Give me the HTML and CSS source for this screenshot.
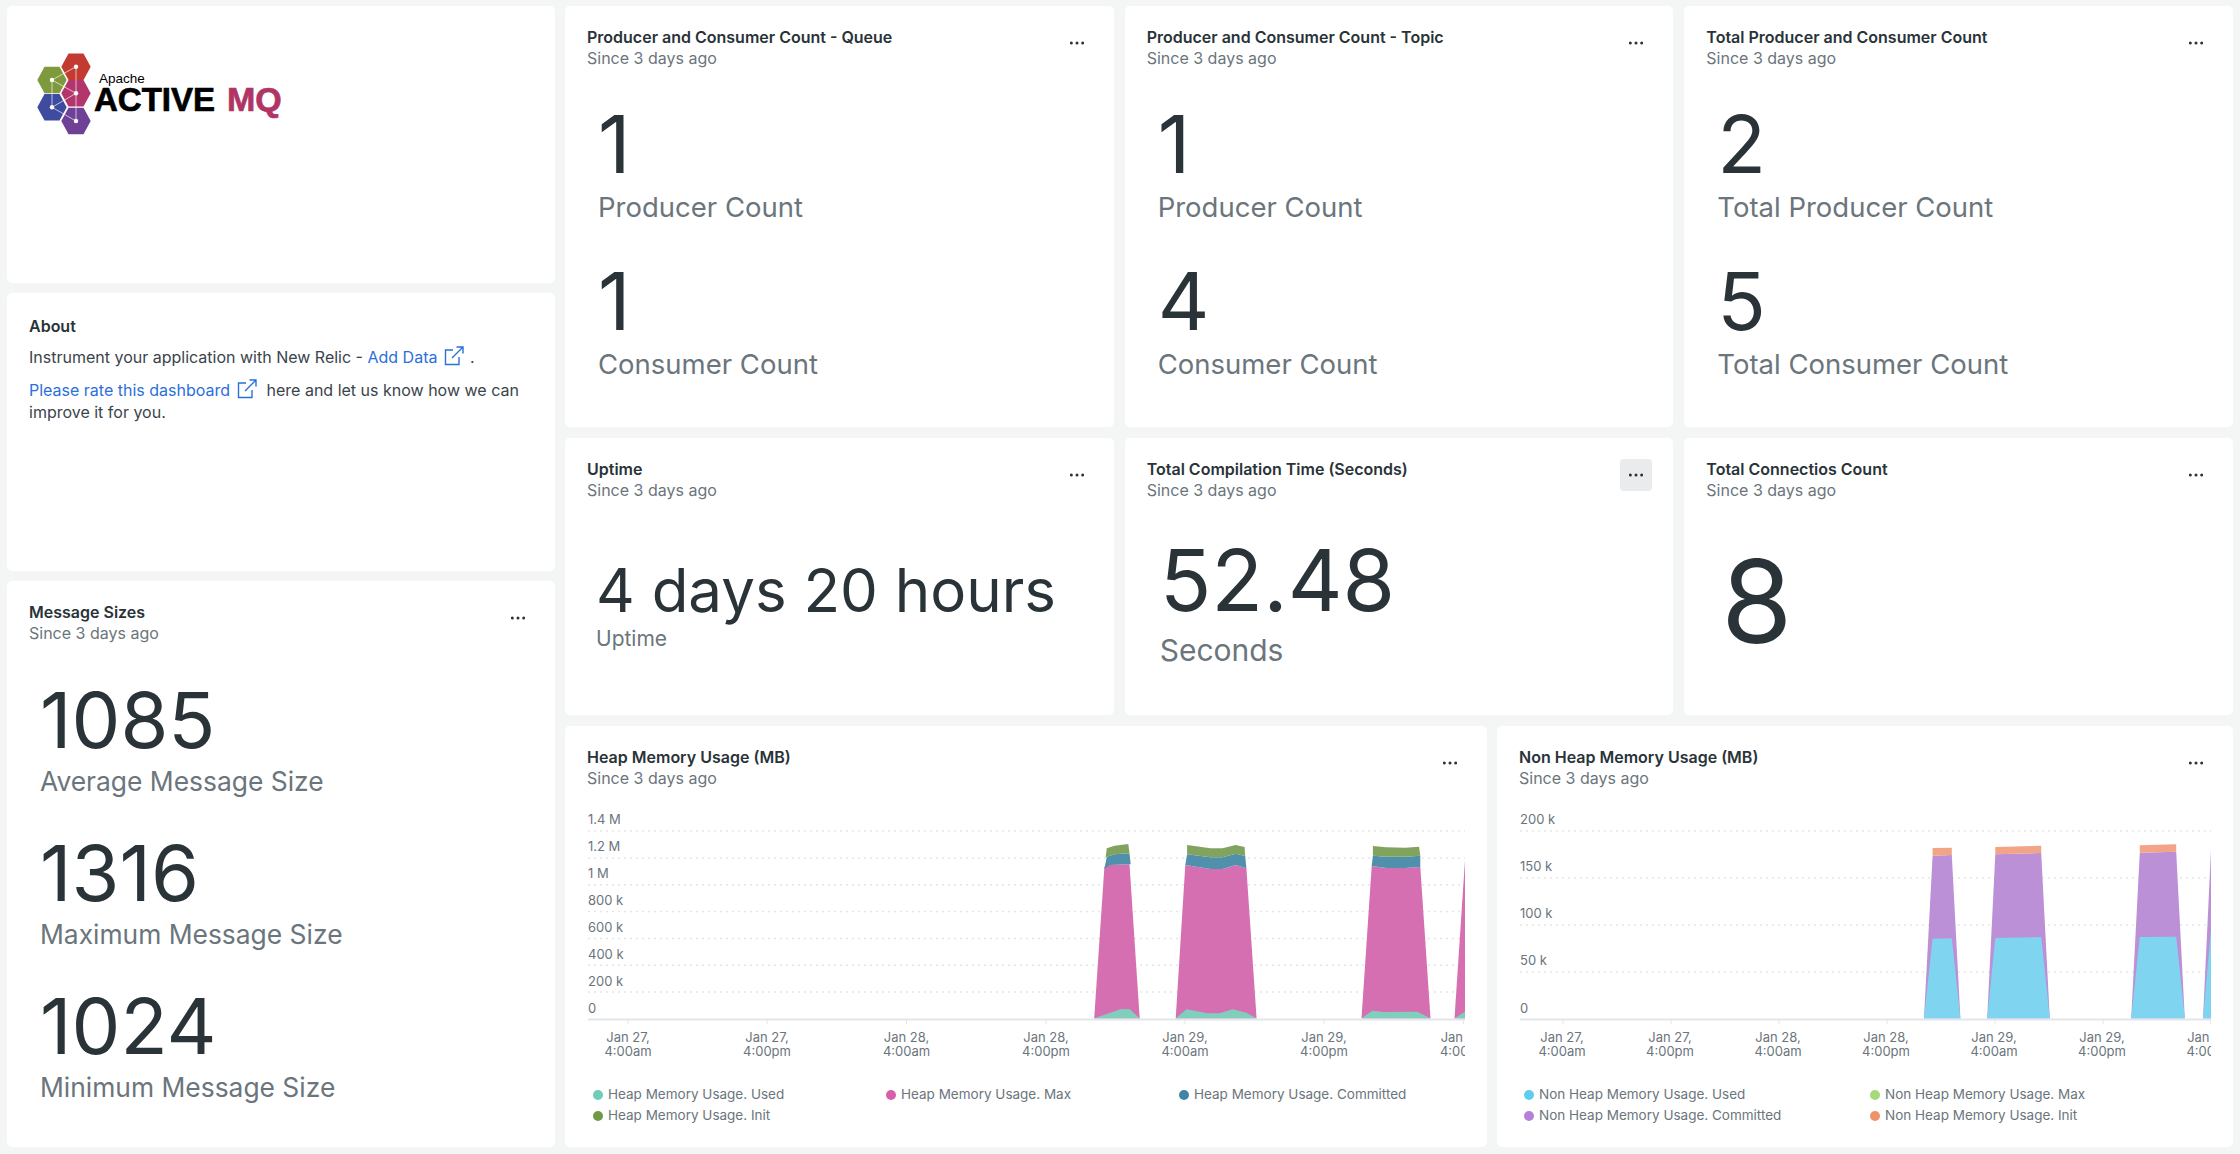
FILE: index.html
```html
<!DOCTYPE html>
<html lang="en">
<head>
    <meta charset="UTF-8">
    <title>Apache ActiveMQ</title>
    <link rel="stylesheet" href="styles.css">
</head>
<body>
<div class="dashboard">
    <div class="left-col">
        <section class="card logo-card">
            <svg class="logo" width="280" height="110" viewBox="0 0 280 110">
                <polygon class="hex-red" points="41.3,26.7 48.5,13.4 63.5,13.4 70.7,26.7 63.5,40 48.5,40"/>
                <polygon class="hex-green" points="17.3,40 24.5,26.7 39.5,26.7 46.7,40 39.5,53.3 24.5,53.3"/>
                <polygon class="hex-pink" points="41.3,53.3 48.5,40 63.5,40 70.7,53.3 63.5,66.6 48.5,66.6"/>
                <polygon class="hex-blue" points="17.3,67.3 24.5,54 39.5,54 46.7,67.3 39.5,80.6 24.5,80.6"/>
                <polygon class="hex-purple" points="41.3,81 48.5,67.7 63.5,67.7 70.7,81 63.5,94.3 48.5,94.3"/>
                <path class="logo-lines" d="M56 26.7V81M56 26.7L32 40M32 40V67.3M32 40L56 53.3M32 67.3L56 53.3M32 67.3L56 81"/>
                <g class="logo-dots">
                    <circle cx="56" cy="26.7" r="2.2"/>
                    <circle cx="32" cy="40" r="2.2"/>
                    <circle cx="56" cy="53.3" r="2.2"/>
                    <circle cx="32" cy="67.3" r="2.2"/>
                    <circle cx="56" cy="81" r="2.2"/>
                </g>
                <text class="logo-small" x="79" y="43">Apache</text>
                <text class="logo-big" x="74" y="71">ACTIVE</text>
                <text class="logo-big logo-mq" x="207" y="71">MQ</text>
            </svg>
        </section>

        <section class="card about-card">
            <h3 class="title">About</h3>
            <p class="about-line">Instrument your application with New Relic - <a class="link" href="#">Add Data<svg class="ext" width="20" height="20" viewBox="0 0 20 20"><path d="M9 4H1.5V18.5H15V11M8 12L18.5 1.5M12.5 1H19V7.5"/></svg></a> .</p>
            <p class="about-line about-rate"><a class="link" href="#">Please rate this dashboard<svg class="ext" width="20" height="20" viewBox="0 0 20 20"><path d="M9 4H1.5V18.5H15V11M8 12L18.5 1.5M12.5 1H19V7.5"/></svg></a> here and let us know how we can improve it for you.</p>
        </section>

        <section class="card msg-card">
            <header class="head">
                <div><h3 class="title">Message Sizes</h3><div class="sub">Since 3 days ago</div></div>
                <button class="menu"><svg width="14" height="4" viewBox="0 0 14 4"><circle cx="1.33" cy="2" r="1.5"/><circle cx="7" cy="2" r="1.5"/><circle cx="12.67" cy="2" r="1.5"/></svg></button>
            </header>
            <div class="msg-stat"><div class="msg-value">1085</div><div class="msg-label">Average Message Size</div></div>
            <div class="msg-stat"><div class="msg-value">1316</div><div class="msg-label">Maximum Message Size</div></div>
            <div class="msg-stat"><div class="msg-value">1024</div><div class="msg-label">Minimum Message Size</div></div>
        </section>
    </div>

    <div class="right-col">
        <div class="tile-row">
            <section class="card">
                <header class="head">
                    <div><h3 class="title">Producer and Consumer Count - Queue</h3><div class="sub">Since 3 days ago</div></div>
                    <button class="menu"><svg width="14" height="4" viewBox="0 0 14 4"><circle cx="1.33" cy="2" r="1.5"/><circle cx="7" cy="2" r="1.5"/><circle cx="12.67" cy="2" r="1.5"/></svg></button>
                </header>
                <div class="stat"><div class="value">1</div><div class="label">Producer Count</div></div>
                <div class="stat"><div class="value">1</div><div class="label">Consumer Count</div></div>
            </section>
            <section class="card">
                <header class="head">
                    <div><h3 class="title">Producer and Consumer Count - Topic</h3><div class="sub">Since 3 days ago</div></div>
                    <button class="menu"><svg width="14" height="4" viewBox="0 0 14 4"><circle cx="1.33" cy="2" r="1.5"/><circle cx="7" cy="2" r="1.5"/><circle cx="12.67" cy="2" r="1.5"/></svg></button>
                </header>
                <div class="stat"><div class="value">1</div><div class="label">Producer Count</div></div>
                <div class="stat"><div class="value">4</div><div class="label">Consumer Count</div></div>
            </section>
            <section class="card">
                <header class="head">
                    <div><h3 class="title">Total Producer and Consumer Count</h3><div class="sub">Since 3 days ago</div></div>
                    <button class="menu"><svg width="14" height="4" viewBox="0 0 14 4"><circle cx="1.33" cy="2" r="1.5"/><circle cx="7" cy="2" r="1.5"/><circle cx="12.67" cy="2" r="1.5"/></svg></button>
                </header>
                <div class="stat"><div class="value">2</div><div class="label">Total Producer Count</div></div>
                <div class="stat"><div class="value">5</div><div class="label">Total Consumer Count</div></div>
            </section>
        </div>

        <div class="tile-row">
            <section class="card">
                <header class="head">
                    <div><h3 class="title">Uptime</h3><div class="sub">Since 3 days ago</div></div>
                    <button class="menu"><svg width="14" height="4" viewBox="0 0 14 4"><circle cx="1.33" cy="2" r="1.5"/><circle cx="7" cy="2" r="1.5"/><circle cx="12.67" cy="2" r="1.5"/></svg></button>
                </header>
                <div class="uptime"><div class="uptime-value">4 days 20 hours</div><div class="uptime-label">Uptime</div></div>
            </section>
            <section class="card">
                <header class="head">
                    <div><h3 class="title">Total Compilation Time (Seconds)</h3><div class="sub">Since 3 days ago</div></div>
                    <button class="menu menu-active"><svg width="14" height="4" viewBox="0 0 14 4"><circle cx="1.33" cy="2" r="1.5"/><circle cx="7" cy="2" r="1.5"/><circle cx="12.67" cy="2" r="1.5"/></svg></button>
                </header>
                <div class="compile"><div class="compile-value">52.48</div><div class="compile-label">Seconds</div></div>
            </section>
            <section class="card">
                <header class="head">
                    <div><h3 class="title">Total Connectios Count</h3><div class="sub">Since 3 days ago</div></div>
                    <button class="menu"><svg width="14" height="4" viewBox="0 0 14 4"><circle cx="1.33" cy="2" r="1.5"/><circle cx="7" cy="2" r="1.5"/><circle cx="12.67" cy="2" r="1.5"/></svg></button>
                </header>
                <div class="conn-value">8</div>
            </section>
        </div>

        <div class="chart-row">
            <section class="card">
                <header class="head">
                    <div><h3 class="title">Heap Memory Usage (MB)</h3><div class="sub">Since 3 days ago</div></div>
                    <button class="menu"><svg width="14" height="4" viewBox="0 0 14 4"><circle cx="1.33" cy="2" r="1.5"/><circle cx="7" cy="2" r="1.5"/><circle cx="12.67" cy="2" r="1.5"/></svg></button>
                </header>
                <svg class="chart chart-heap" width="877" height="250" viewBox="0 0 877 250">
                    <path class="grid-line" d="M0 21H877M0 47.9H877M0 74.7H877M0 101.6H877M0 128.4H877M0 155.3H877M0 182.1H877"/>
                    <path class="base-line" d="M0 209.5H877"/>
                    <path class="tick" d="M40 210V214M179 210V214M318.5 210V214M458 210V214M597 210V214M736 210V214M875.5 210V214"/>
                    <g class="axis">
                        <text x="0" y="13.5">1.4 M</text>
                        <text x="0" y="40.5">1.2 M</text>
                        <text x="0" y="67.5">1 M</text>
                        <text x="0" y="94.5">800 k</text>
                        <text x="0" y="121.5">600 k</text>
                        <text x="0" y="148.5">400 k</text>
                        <text x="0" y="175.5">200 k</text>
                        <text x="0" y="202.5">0</text>
                    </g>
                    <g class="axis axis-x">
                        <text x="40" y="232">Jan 27,</text><text x="40" y="246">4:00am</text>
                        <text x="179" y="232">Jan 27,</text><text x="179" y="246">4:00pm</text>
                        <text x="318.5" y="232">Jan 28,</text><text x="318.5" y="246">4:00am</text>
                        <text x="458" y="232">Jan 28,</text><text x="458" y="246">4:00pm</text>
                        <text x="597" y="232">Jan 29,</text><text x="597" y="246">4:00am</text>
                        <text x="736" y="232">Jan 29,</text><text x="736" y="246">4:00pm</text>
                        <text x="875.5" y="232">Jan 30,</text><text x="875.5" y="246">4:00am</text>
                    </g>
                    <polygon class="a-pink" points="506.2,208.3 516.4,56.7 522.3,55 541.5,54.3 551.7,208.3"/>
                    <polygon class="a-teal" points="506.2,208.3 532.5,199.3 541.5,199 551.7,208.3"/>
                    <polygon class="a-blue" points="516.4,58.7 518.8,46.7 526.5,44.3 541.5,43.3 542.7,54.3 522.3,55"/>
                    <polygon class="a-green" points="517.6,47.3 518.8,38.3 526.5,35.7 540.3,34 541.5,43.3 526.5,44.3"/>
                    <polygon class="a-pink" points="587.7,208.3 597.3,55 622.5,59 634.5,59 647.6,55 658.4,58.3 668.6,208.3"/>
                    <polygon class="a-teal" points="587.7,208.3 598.5,199.3 619.5,203.3 631.5,203.3 644.6,199.3 658.4,202.7 668.6,208.3"/>
                    <polygon class="a-blue" points="597.3,55 599.1,44.3 622.5,47.3 634.5,47.3 647.6,43.7 657.2,46 658.4,58.3 647.6,55 634.5,59 622.5,59"/>
                    <polygon class="a-green" points="599.1,44.3 599.1,35 622.5,38.3 634.5,38.3 647.6,35 656.6,37 657.2,46 647.6,43.7 634.5,47.3 622.5,47.3"/>
                    <polygon class="a-pink" points="773.5,208.3 783.7,56 798.1,58 817.3,58 832.3,57 842.5,208.3"/>
                    <polygon class="a-teal" points="773.5,208.3 784.3,200.7 796.3,202 829.3,201.7 842.5,208.3"/>
                    <polygon class="a-blue" points="783.7,56 784.9,45.7 798.1,46.7 817.3,46.7 832.3,45.7 832.3,57 817.3,58 798.1,58"/>
                    <polygon class="a-green" points="784.9,45.7 784.9,36 798.1,37.3 817.3,37.7 831.1,36.7 832.3,45.7 817.3,46.7 798.1,46.7"/>
                    <polygon class="a-pink" points="866.5,208.3 877,50 877,208.3"/>
                    <polygon class="a-teal" points="866.5,208.3 877,201.7 877,208.3"/>
                </svg>
                <ul class="legend legend-heap">
                    <li><i class="dot d-teal"></i>Heap Memory Usage. Used</li>
                    <li><i class="dot d-pink"></i>Heap Memory Usage. Max</li>
                    <li><i class="dot d-blue"></i>Heap Memory Usage. Committed</li>
                    <li><i class="dot d-green"></i>Heap Memory Usage. Init</li>
                </ul>
            </section>
            <section class="card">
                <header class="head">
                    <div><h3 class="title">Non Heap Memory Usage (MB)</h3><div class="sub">Since 3 days ago</div></div>
                    <button class="menu"><svg width="14" height="4" viewBox="0 0 14 4"><circle cx="1.33" cy="2" r="1.5"/><circle cx="7" cy="2" r="1.5"/><circle cx="12.67" cy="2" r="1.5"/></svg></button>
                </header>
                <svg class="chart" width="691" height="250" viewBox="0 0 691 250">
                    <path class="grid-line" d="M0 21H691M0 68H691M0 115H691M0 162H691"/>
                    <path class="base-line" d="M0 209.5H691"/>
                    <path class="tick" d="M43 210V214M151 210V214M259 210V214M367 210V214M475 210V214M583 210V214M690.5 210V214"/>
                    <g class="axis">
                        <text x="0" y="13.5">200 k</text>
                        <text x="0" y="60.5">150 k</text>
                        <text x="0" y="107.5">100 k</text>
                        <text x="0" y="154.5">50 k</text>
                        <text x="0" y="202.5">0</text>
                    </g>
                    <g class="axis axis-x">
                        <text x="42" y="232">Jan 27,</text><text x="42" y="246">4:00am</text>
                        <text x="150" y="232">Jan 27,</text><text x="150" y="246">4:00pm</text>
                        <text x="258" y="232">Jan 28,</text><text x="258" y="246">4:00am</text>
                        <text x="366" y="232">Jan 28,</text><text x="366" y="246">4:00pm</text>
                        <text x="474" y="232">Jan 29,</text><text x="474" y="246">4:00am</text>
                        <text x="582" y="232">Jan 29,</text><text x="582" y="246">4:00pm</text>
                        <text x="690" y="232">Jan 30,</text><text x="690" y="246">4:00am</text>
                    </g>
                    <polygon class="a-purple" points="404,208.3 412.6,45.7 431.8,45 440.4,208.3"/>
                    <polygon class="a-cyan" points="404,208.3 412.6,128.7 431.8,128.3 440.4,208.3"/>
                    <polygon class="a-orange" points="412.6,45.7 412.6,38 431.8,37.7 431.8,45"/>
                    <polygon class="a-purple" points="467.2,208.3 475.3,44.3 521.2,43 529.8,208.3"/>
                    <polygon class="a-cyan" points="467.2,208.3 475.3,128 521.2,127 529.8,208.3"/>
                    <polygon class="a-orange" points="475.3,44.3 475.3,37 521.2,35.7 521.2,43"/>
                    <polygon class="a-purple" points="611.2,208.3 619.8,42.7 656.2,41.7 664.8,208.3"/>
                    <polygon class="a-cyan" points="611.2,208.3 619.8,127 656.2,126.7 664.8,208.3"/>
                    <polygon class="a-orange" points="619.8,42.7 619.8,35.3 656.2,34.3 656.2,41.7"/>
                    <polygon class="a-purple" points="683,208.3 691,40 691,208.3"/>
                    <polygon class="a-cyan" points="683,208.3 691,120 691,208.3"/>
                </svg>
                <ul class="legend legend-nonheap">
                    <li><i class="dot d-cyan"></i>Non Heap Memory Usage. Used</li>
                    <li><i class="dot d-lime"></i>Non Heap Memory Usage. Max</li>
                    <li><i class="dot d-purple"></i>Non Heap Memory Usage. Committed</li>
                    <li><i class="dot d-orange"></i>Non Heap Memory Usage. Init</li>
                </ul>
            </section>
        </div>
    </div>
</div>
</body>
</html>
```

FILE: styles.css
```css
* {
    box-sizing: border-box;
}

body {
    margin: 0;
    height: 1154px;
    overflow: hidden;
    background-color: #f4f5f5;
    font-family: Inter, "Noto Sans", sans-serif;
    color: #293338;
}

.dashboard {
    display: grid;
    grid-template-columns: 548px 1668px;
    column-gap: 10px;
    padding: 6px 7px;
    height: 1153px;
}

.left-col {
    display: grid;
    grid-template-rows: 277px 278px 566px;
    row-gap: 10px;
}

.right-col {
    display: grid;
    grid-template-rows: 421px 277px 421px;
    row-gap: 11px;
}

.tile-row {
    display: grid;
    grid-template-columns: repeat(3, 1fr);
    column-gap: 11px;
}

.chart-row {
    display: grid;
    grid-template-columns: 922px 736px;
    column-gap: 10px;
}

.card {
    background-color: #fff;
    border-radius: 5px;
    overflow: hidden;
}

/* card header */
.head {
    display: flex;
    justify-content: space-between;
    align-items: flex-start;
    padding: 21px 21px 0 22px;
    height: 62px;
}

.title {
    margin: 0;
    font-size: 16px;
    line-height: 21px;
    font-weight: 600;
    color: #293338;
}

.sub {
    font-size: 16px;
    line-height: 21px;
    color: #6b757c;
}

.menu {
    display: flex;
    align-items: center;
    justify-content: center;
    width: 32px;
    height: 32px;
    padding: 0;
    border: none;
    border-radius: 4px;
    background: none;
    fill: #293338;
}

.menu-active {
    background-color: #e9ebec;
}

/* logo */
.logo {
    display: block;
    margin: 34px 0 0 13px;
}

.hex-red { fill: #c23a30; }
.hex-green { fill: #7f9a3c; }
.hex-pink { fill: #b2366b; }
.hex-blue { fill: #3f4b9f; }
.hex-purple { fill: #6e4197; }

.logo-lines {
    fill: none;
    stroke: #fff;
    stroke-opacity: 0.65;
    stroke-width: 1;
}

.logo-dots {
    fill: #fff;
}

.logo-small {
    font-family: "Liberation Sans", sans-serif;
    font-size: 13.5px;
    fill: #000;
}

.logo-big {
    font-family: "Liberation Sans", sans-serif;
    font-size: 33px;
    font-weight: 700;
    fill: #000;
    stroke: #000;
    stroke-width: 0.7;
}

.logo-mq {
    font-size: 34px;
    fill: #b03565;
    stroke: #b03565;
}

/* about */
.about-card {
    padding: 23px 22px;
}

.about-line {
    margin: 8.5px 0 0;
    font-size: 16px;
    line-height: 22px;
    color: #3a444b;
}

.about-rate {
    margin-top: 11.5px;
}

.link {
    color: #2a70dc;
    text-decoration: none;
}

.ext {
    margin-left: 7px;
    margin-right: 1px;
    vertical-align: -3px;
    fill: none;
    stroke: #2a70dc;
    stroke-width: 1.4;
}

.about-rate .ext {
    margin-right: 5px;
}

/* stat tiles */
.stat {
    margin-top: 31px;
    padding-left: 33px;
}

.value {
    font-size: 80px;
    line-height: 90px;
    color: #293338;
}

.label {
    font-size: 27.5px;
    line-height: 36px;
    color: #6b757c;
}

.uptime {
    margin-top: 55px;
    padding-left: 31px;
}

.uptime-value {
    font-size: 60px;
    line-height: 70px;
}

.uptime-label {
    font-size: 21px;
    line-height: 28px;
    color: #6b757c;
}

.compile {
    margin-top: 36px;
    padding-left: 35px;
}

.compile-value {
    font-size: 85px;
    line-height: 90px;
}

.compile-label {
    margin-top: 6px;
    font-size: 30px;
    line-height: 36px;
    color: #6b757c;
}

.conn-value {
    margin-top: 37px;
    padding-left: 37px;
    font-size: 115px;
    line-height: 130px;
}

.msg-stat {
    padding-left: 33px;
    margin-top: 33px;
}

.head + .msg-stat {
    margin-top: 37px;
}

.msg-value {
    font-size: 77.5px;
    line-height: 80px;
}

.msg-label {
    padding-top: 3px;
    font-size: 26.4px;
    line-height: 37px;
    color: #6b757c;
}

/* charts */
.chart {
    display: block;
    margin: 22px 0 0 23px;
}

.grid-line {
    stroke: #e3e6e8;
    stroke-width: 1.5;
    stroke-dasharray: 2 4;
    fill: none;
}

.base-line {
    stroke: #e3e6e8;
    stroke-width: 2;
}

.tick {
    stroke: #e3e6e8;
    stroke-width: 1;
}

.axis {
    font-size: 13px;
    fill: #6b757c;
}

.axis-x {
    text-anchor: middle;
}

.a-teal { fill: #80cfbd; }
.a-pink { fill: #d66fb1; }
.a-blue { fill: #5090ad; }
.a-green { fill: #80a45e; }
.a-cyan { fill: #7fd5ef; }
.a-purple { fill: #bb90d7; }
.a-orange { fill: #f3a386; }

.legend {
    display: grid;
    margin: 24px 0 0;
    padding: 0;
    list-style: none;
    font-size: 13.5px;
    line-height: 21px;
    color: #6b757c;
}

.legend li {
    display: flex;
    align-items: center;
    white-space: nowrap;
}

.legend-heap {
    grid-template-columns: repeat(3, 293px);
    padding-left: 28px;
}

.legend-nonheap {
    grid-template-columns: repeat(2, 346px);
    padding-left: 27px;
}

.dot {
    width: 10px;
    height: 10px;
    margin-right: 5px;
    border-radius: 50%;
}

.d-teal { background-color: #6fcdb8; }
.d-pink { background-color: #d85fab; }
.d-blue { background-color: #3d86a6; }
.d-green { background-color: #6e9a45; }
.d-cyan { background-color: #5fcdee; }
.d-lime { background-color: #a5d97a; }
.d-purple { background-color: #b77fd9; }
.d-orange { background-color: #f0916b; }
```
